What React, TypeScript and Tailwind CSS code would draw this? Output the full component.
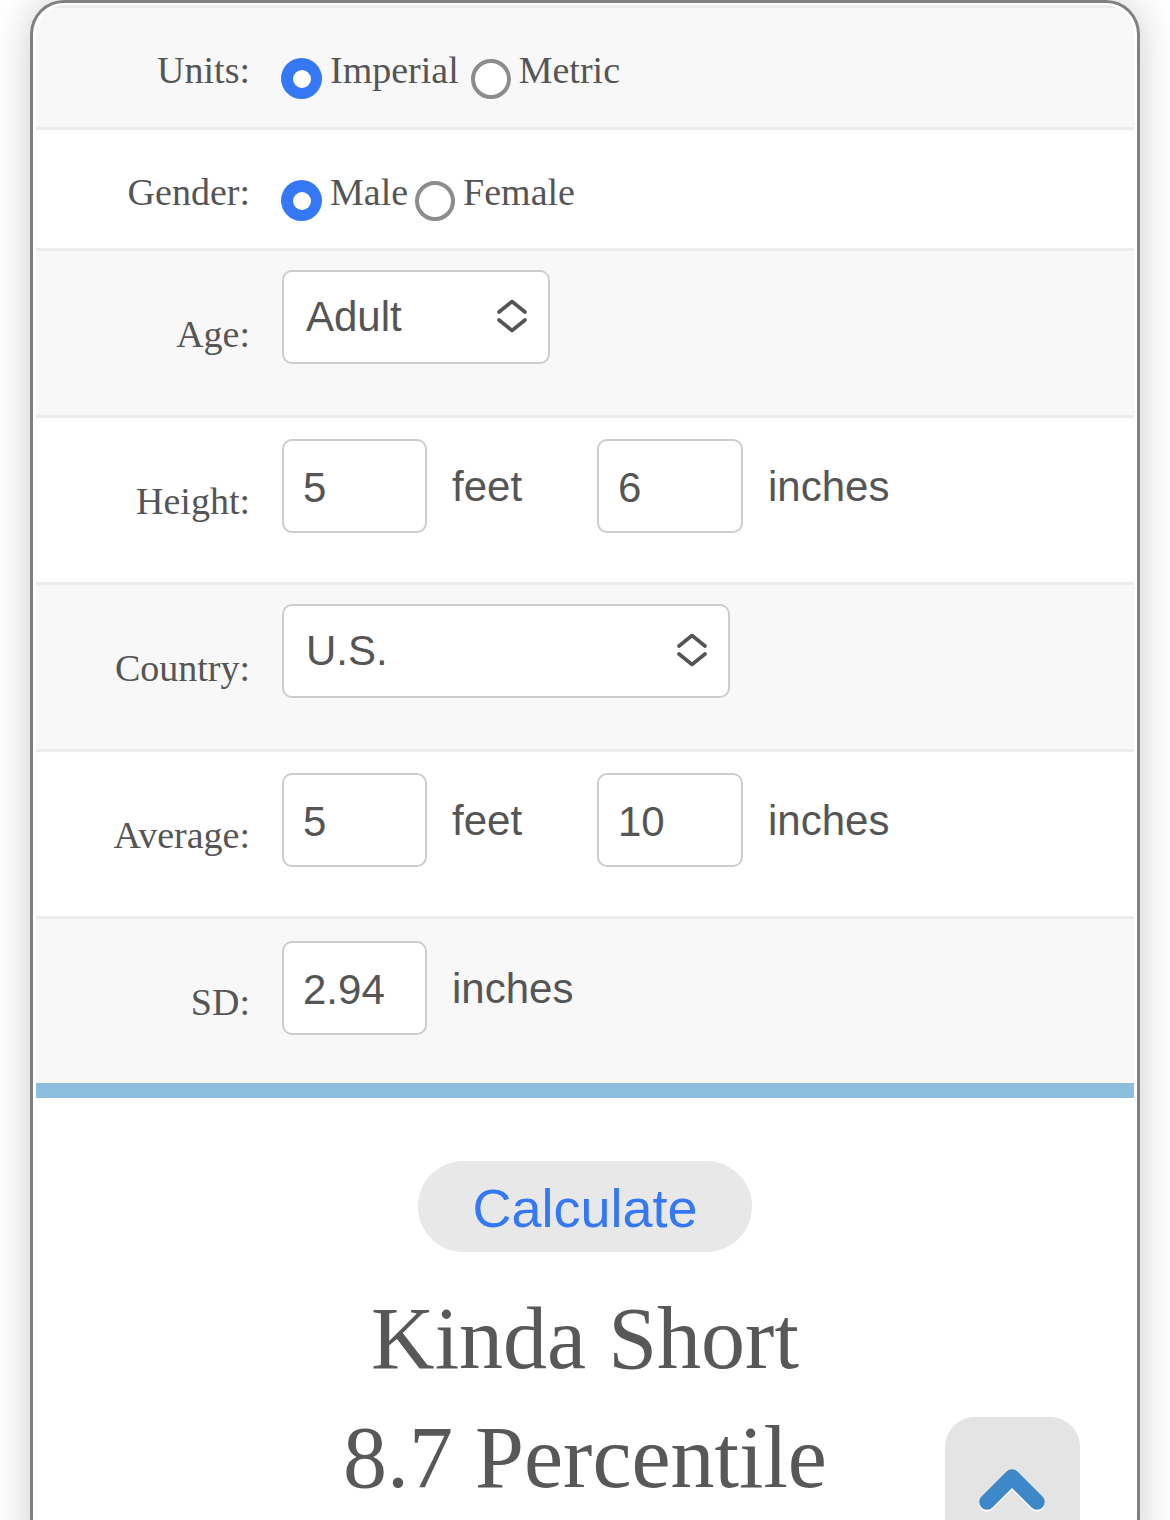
import React from "react";

const serif = { fontFamily: '"Liberation Serif", "Times New Roman", serif' };
const sans = { fontFamily: '"Liberation Sans", Arial, Helvetica, sans-serif' };

function Radio({ checked }: { checked: boolean }) {
  return checked ? (
    <div className="mt-[11px] flex h-[41px] w-[41px] shrink-0 items-center justify-center rounded-full bg-[#3478f6]">
      <div className="h-[18px] w-[18px] rounded-full bg-white" />
    </div>
  ) : (
    <div className="mt-[12px] h-[40px] w-[40px] shrink-0 rounded-full border-[4px] border-[#8c8c8c] bg-white" />
  );
}

function RadioRow({
  label,
  options,
  bg,
  h,
  gap,
}: {
  label: string;
  options: { text: string; checked: boolean }[];
  bg: string;
  h: string;
  gap: string;
}) {
  return (
    <div className={`flex items-start border-t-[3px] border-[#ececec] ${bg} ${h}`}>
      <div
        className="w-[214px] shrink-0 pt-[39px] text-right text-[38px] leading-[46px] text-[#555555]"
        style={serif}
      >
        {label}
      </div>
      <div className="ml-[31px] flex items-start pt-[39px]">
        {options.map((o, i) => (
          <div key={i} className={`flex items-start ${i > 0 ? gap : ""}`}>
            <Radio checked={o.checked} />
            <span
              className="ml-[8px] text-[38px] leading-[46px] text-[#555555]"
              style={serif}
            >
              {o.text}
            </span>
          </div>
        ))}
      </div>
    </div>
  );
}

function Box({ value, w }: { value: string; w: string }) {
  return (
    <div
      className={`flex h-[94px] ${w} shrink-0 items-center rounded-[10px] border-2 border-[#cdcdcd] bg-white pl-[19px] text-[42px] text-[#555555]`}
      style={sans}
    >
      <span className="mt-[2px]">{value}</span>
    </div>
  );
}

function SelectBox({ value, w }: { value: string; w: string }) {
  return (
    <div
      className={`flex h-[94px] ${w} shrink-0 items-center justify-between rounded-[10px] border-2 border-[#cdcdcd] bg-white pl-[22px] pr-[21px] text-[42px] text-[#555555]`}
      style={sans}
    >
      <span className="-mt-[2px]">{value}</span>
      <svg width="30" height="36" viewBox="0 0 30 36" fill="none">
        <path
          d="M2 13 L15 2.5 L28 13"
          stroke="#555555"
          strokeWidth="3.6"
          strokeLinecap="round"
          strokeLinejoin="round"
        />
        <path
          d="M2 21 L15 31.5 L28 21"
          stroke="#555555"
          strokeWidth="3.6"
          strokeLinecap="round"
          strokeLinejoin="round"
        />
      </svg>
    </div>
  );
}

function FieldRow({
  label,
  bg,
  children,
  h = "h-[167px]",
  pt = "pt-[20px]",
}: {
  label: string;
  bg: string;
  children: React.ReactNode;
  h?: string;
  pt?: string;
}) {
  return (
    <div className={`flex items-start border-t-[3px] border-[#ececec] ${bg} ${h}`}>
      <div
        className="w-[214px] shrink-0 pt-[60px] text-right text-[38px] leading-[46px] text-[#555555]"
        style={serif}
      >
        {label}
      </div>
      <div className={`ml-[32px] flex items-center ${pt}`}>{children}</div>
    </div>
  );
}

function Unit({ text, w = "" }: { text: string; w?: string }) {
  return (
    <span className={`ml-[25px] ${w} text-[42px] text-[#555555]`} style={sans}>
      {text}
    </span>
  );
}

export default function App() {
  return (
    <div className="relative h-[1520px] w-[1170px] overflow-hidden bg-white">
      <div className="ml-[30px] h-[1560px] w-[1110px] rounded-t-[34px] border-[3px] border-b-0 border-[#808080] bg-white px-[3px] pt-[2px] shadow-[0_0_40px_rgba(0,0,0,0.2)]">
        <div className="overflow-hidden rounded-t-[30px]">
          <RadioRow
            label="Units:"
            bg="bg-[#f8f8f8]"
            h="h-[122px]"
            gap="ml-[12px]"
            options={[
              { text: "Imperial", checked: true },
              { text: "Metric", checked: false },
            ]}
          />
          <RadioRow
            label="Gender:"
            bg="bg-white"
            h="h-[121px]"
            gap="ml-[7px]"
            options={[
              { text: "Male", checked: true },
              { text: "Female", checked: false },
            ]}
          />
          <FieldRow label="Age:" bg="bg-[#f8f8f8]" pt="pt-[19px]">
            <SelectBox value="Adult" w="w-[268px]" />
          </FieldRow>
          <FieldRow label="Height:" bg="bg-white" pt="pt-[21px]">
            <Box value="5" w="w-[145px]" />
            <Unit text="feet" w="w-[145px]" />
            <Box value="6" w="w-[146px]" />
            <Unit text="inches" />
          </FieldRow>
          <FieldRow label="Country:" bg="bg-[#f8f8f8]" pt="pt-[19px]">
            <SelectBox value="U.S." w="w-[448px]" />
          </FieldRow>
          <FieldRow label="Average:" bg="bg-white" pt="pt-[21px]">
            <Box value="5" w="w-[145px]" />
            <Unit text="feet" w="w-[145px]" />
            <Box value="10" w="w-[146px]" />
            <Unit text="inches" />
          </FieldRow>
          <FieldRow label="SD:" bg="bg-[#f8f8f8]" h="h-[167px]" pt="pt-[22px]">
            <Box value="2.94" w="w-[145px]" />
            <Unit text="inches" />
          </FieldRow>
          <div className="h-[15px] bg-[#8dbee0]" />
          <div className="flex flex-col items-center bg-white pt-[63px]">
            <button
              className="flex h-[91px] w-[334px] items-center justify-center rounded-full bg-[#e8e8e8] text-[54px] text-[#3478f6]"
              style={sans}
            >
              <span className="mt-[3px]">Calculate</span>
            </button>
            <div
              className="mt-[27px] text-center text-[88px] leading-[119px] text-[#585858]"
              style={serif}
            >
              <div>Kinda Short</div>
              <div>8.7 Percentile</div>
            </div>
          </div>
        </div>
      </div>
      <div className="absolute left-[945px] top-[1417px] h-[135px] w-[135px] rounded-[30px] bg-[#e4e4e4]">
        <svg width="135" height="135" viewBox="0 0 135 135" fill="none">
          <path
            d="M42 87 L67 62 L92 87"
            stroke="#ffffff"
            strokeWidth="15.5"
            strokeLinecap="round"
            strokeLinejoin="round"
          />
          <path
            d="M42 85 L67 60 L92 85"
            stroke="#3d88c8"
            strokeWidth="15.5"
            strokeLinecap="round"
            strokeLinejoin="round"
          />
        </svg>
      </div>
    </div>
  );
}
